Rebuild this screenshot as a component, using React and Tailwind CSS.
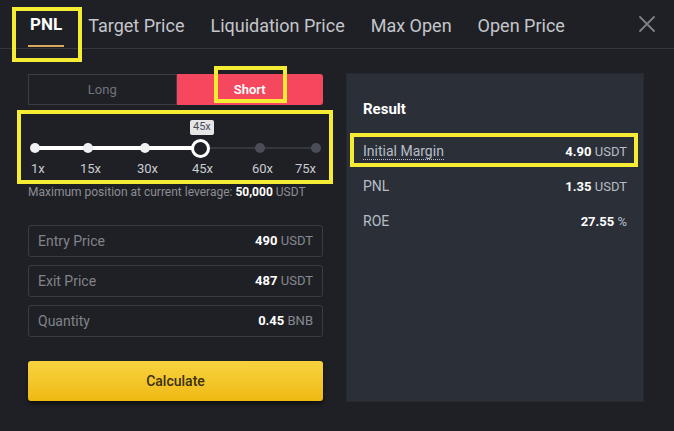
export default function App() {
  const tabs = ['PNL', 'Target Price', 'Liquidation Price', 'Max Open', 'Open Price'];
  const marks = [
    { label: '1x', x: 7, lx: 3, on: true },
    { label: '15x', x: 60, lx: 52, on: true },
    { label: '30x', x: 117, lx: 109, on: true },
    { label: '60x', x: 232, lx: 224, on: false },
    { label: '75x', x: 288, lx: 267, on: false },
  ];
  const inputs = [
    { label: 'Entry Price', value: '490', unit: 'USDT' },
    { label: 'Exit Price', value: '487', unit: 'USDT' },
    { label: 'Quantity', value: '0.45', unit: 'BNB' },
  ];
  const results = [
    { label: 'Initial Margin', value: '4.90', unit: 'USDT', dotted: true },
    { label: 'PNL', value: '1.35', unit: 'USDT' },
    { label: 'ROE', value: '27.55', unit: '%' },
  ];

  return (
    <div className="relative w-[674px] h-[431px] overflow-hidden bg-[#1f2025] font-['Roboto',sans-serif]">
      {/* Tabs */}
      <div className="flex items-center h-[49px] border-b border-[#35373d] pl-[30px] pr-[18px]">
        <div className="flex gap-[26px] h-full">
          {tabs.map((t, i) => (
            <div key={t} className="relative flex items-center h-full pt-[2px]">
              <span className={i === 0 ? 'text-[17px] font-bold text-white' : 'text-[18px] text-[#c4c6cb]'}>{t}</span>
              {i === 0 && <div className="absolute left-[-2px] right-[-2px] bottom-[1px] h-[2px] bg-[#d9a85a]" />}
            </div>
          ))}
        </div>
        <svg className="ml-auto" width="18" height="18" viewBox="0 0 18 18">
          <path d="M2 2 L16 16 M16 2 L2 16" stroke="#7d8087" strokeWidth="1.8" strokeLinecap="round" />
        </svg>
      </div>

      {/* Body */}
      <div className="flex pt-[24px] pl-[28px] gap-[23px]">
        {/* Left column */}
        <div className="w-[295px] flex flex-col">
          <div className="mt-[1px] flex h-[31px]">
            <div className="flex-1 flex items-center justify-center border border-[#3a3d44] text-[13px] text-[#70747b]">Long</div>
            <div className="flex-1 flex items-center justify-center bg-[#f5485f] rounded-r-[3px] text-[13px] font-semibold text-white">Short</div>
          </div>

          {/* Slider */}
          <div className="relative h-[77px]">
            <div className="absolute left-[162px] top-[15px] px-[3px] h-[15px] flex items-center bg-[#e6e6e6] rounded-[2px] text-[11px] text-[#474d57]">45x</div>
            <div className="absolute left-[7px] top-[41px] w-[165px] h-[4px] bg-white rounded-full" />
            <div className="absolute left-[172px] top-[42px] w-[116px] h-[2px] bg-[#34363d]" />
            {marks.map((m) => (
              <div
                key={m.label}
                className={m.on ? 'absolute top-[38px] w-[10px] h-[10px] -ml-[5px] rounded-full bg-[#eef0f3]' : 'absolute top-[38px] w-[10px] h-[10px] -ml-[5px] rounded-full bg-[#4a4d57]'}
                style={{ left: m.x }}
              />
            ))}
            <div className="absolute left-[163px] top-[34px] w-[19px] h-[19px] rounded-full border-[3px] border-white bg-[#1f2025]" />
            {marks.map((m) => (
              <span key={m.label + 'l'} className="absolute top-[54px] text-[13px] text-[#c9cbd0]" style={{ left: m.lx }}>{m.label}</span>
            ))}
            <span className="absolute top-[54px] left-[164px] text-[13px] text-[#c9cbd0]">45x</span>
          </div>

          <div className="mt-[2px] text-[12px] leading-[16px] text-[#8b8e95]">
            Maximum position at current leverage: <span className="font-bold text-white">50,000</span> USDT
          </div>

          <div className="mt-[25px] flex flex-col gap-[8px]">
            {inputs.map((f) => (
              <div key={f.label} className="h-[32px] flex items-center justify-between px-[9px] border border-[#393b42] rounded-[3px]">
                <span className="text-[14px] text-[#80838a]">{f.label}</span>
                <span className="text-[13px] text-[#868991]">
                  <span className="font-bold text-white">{f.value}</span> {f.unit}
                </span>
              </div>
            ))}
          </div>

          <button className="mt-[24px] h-[40px] rounded-[3px] bg-gradient-to-b from-[#f8d33d] to-[#efb90f] text-[14px] font-medium text-[#3b300d] shadow-[0_3px_4px_rgba(0,0,0,0.5)]">
            Calculate
          </button>
        </div>

        {/* Right panel */}
        <div className="w-[298px] h-[329px] bg-[#2b3038] border border-[#252a31] px-[16px] pt-[24px]">
          <div className="text-[15px] font-bold text-white">Result</div>
          <div className="mt-[23px] flex flex-col gap-[19px]">
            {results.map((r) => (
              <div key={r.label} className="flex items-center justify-between h-[16px]">
                <span className={r.dotted ? 'text-[14px] text-[#b7bdc6] border-b border-dotted border-[#b7bdc6] leading-[16px]' : 'text-[14px] text-[#b7bdc6]'}>{r.label}</span>
                <span className="text-[13px] text-[#b7bdc6]">
                  <span className="font-bold text-white">{r.value}</span> {r.unit}
                </span>
              </div>
            ))}
          </div>
        </div>
      </div>

      {/* Annotation boxes */}
      <div className="absolute left-[12px] top-[7px] w-[70px] h-[55px] border-[4px] border-[#f6ec33]" />
      <div className="absolute left-[214px] top-[66px] w-[73px] h-[37px] border-[4px] border-[#f6ec33]" />
      <div className="absolute left-[17px] top-[110px] w-[316px] h-[74px] border-[4px] border-[#f6ec33]" />
      <div className="absolute left-[350px] top-[133px] w-[288px] h-[34px] border-[4px] border-[#f6ec33]" />
    </div>
  );
}
